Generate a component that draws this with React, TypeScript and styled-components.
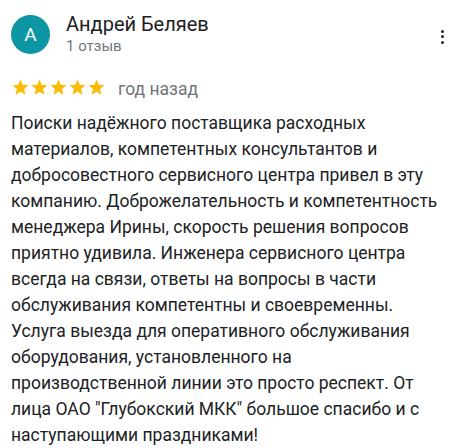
import * as React from 'react';
import styled, { createGlobalStyle } from 'styled-components';

const GlobalStyle = createGlobalStyle`
  body {
    margin: 0;
    background: #fff;
    font-family: Roboto, "Noto Sans", Arial, sans-serif;
    color: #202124;
  }
`;

const Card = styled.div`
  width: 462px;
  height: 448px;
  box-sizing: border-box;
  padding: 12px 11px 0 11px;
  overflow: hidden;
`;

const Header = styled.div`
  display: flex;
  align-items: flex-start;
`;

const Avatar = styled.div`
  width: 39px;
  height: 39px;
  border-radius: 50%;
  background: #0c95a2;
  color: #fff;
  display: flex;
  align-items: center;
  justify-content: center;
  font-size: 19px;
  margin-top: 3px;
  flex-shrink: 0;
`;

const Author = styled.div`
  flex: 1;
  margin-left: 16px;
  display: flex;
  flex-direction: column;
`;

const Name = styled.div`
  font-size: 20px;
  line-height: 24px;
  color: #202124;
`;

const Meta = styled.div`
  font-size: 15px;
  line-height: 20px;
  color: #70757a;
`;

const MenuButton = styled.button`
  border: 0;
  background: none;
  padding: 0;
  margin: 17.5px 6px 0 0;
  width: 6px;
  display: flex;
  flex-direction: column;
  align-items: center;
  gap: 2.7px;
`;

const Dot = styled.span`
  width: 3px;
  height: 3px;
  border-radius: 50%;
  background: #202124;
`;

const RatingRow = styled.div`
  display: flex;
  align-items: center;
  height: 20px;
  margin-top: 21px;
`;

const Stars = styled.div`
  display: flex;
`;

const When = styled.span`
  margin-left: 12px;
  padding-top: 3px;
  font-size: 17.5px;
  line-height: 20px;
  color: #70757a;
`;

const Text = styled.p`
  margin: 13px 0 0 0;
  font-size: 17.5px;
  line-height: 26px;
  color: #202124;
`;

const Star = () => (
  <svg width="19" height="19" viewBox="0 0 24 24">
    <path
      fill="#fbbc04"
      d="M12 17.27L18.18 21l-1.64-7.03L22 9.24l-7.19-.61L12 2 9.19 8.63 2 9.24l5.46 4.73L5.82 21z"
    />
  </svg>
);

const review =
  'Поиски надёжного поставщика расходных материалов, компетентных консультантов и добросовестного сервисного центра привел в эту компанию. Доброжелательность и компетентность менеджера Ирины, скорость решения вопросов приятно удивила. Инженера сервисного центра всегда на связи, ответы на вопросы в части обслуживания компетентны и своевременны. Услуга выезда для оперативного обслуживания оборудования, установленного на производственной линии это просто респект. От лица ОАО "Глубокский МКК" большое спасибо и с наступающими праздниками!';

const App = () => (
  <>
    <GlobalStyle />
    <Card>
      <Header>
        <Avatar>А</Avatar>
        <Author>
          <Name>Андрей Беляев</Name>
          <Meta>1 отзыв</Meta>
        </Author>
        <MenuButton aria-label="Ещё">
          <Dot />
          <Dot />
          <Dot />
        </MenuButton>
      </Header>
      <RatingRow>
        <Stars>
          {[0, 1, 2, 3, 4].map(i => (
            <Star key={i} />
          ))}
        </Stars>
        <When>год назад</When>
      </RatingRow>
      <Text>{review}</Text>
    </Card>
  </>
);

export default App;
